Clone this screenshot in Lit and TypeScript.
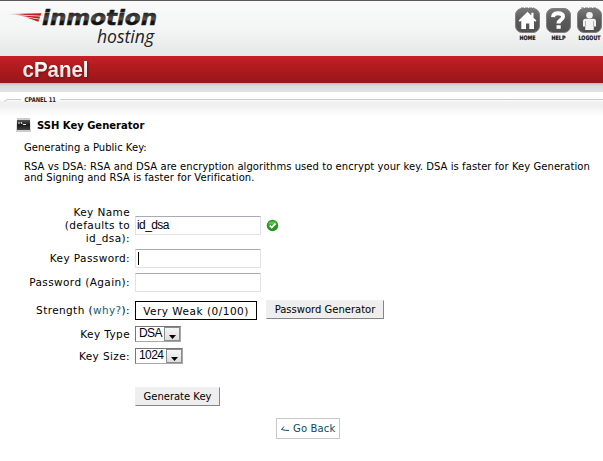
import { LitElement, html, css, svg } from "lit";
import { customElement, property } from "lit/decorators.js";

@customElement("nav-icon")
class NavIcon extends LitElement {
  @property() kind = "home";
  @property() label = "";
  static styles = css`
    :host { display: block; flex: none; width: 27px; height: 34px; }
    svg { display: block; overflow: visible; }
    .cap { font: bold 6px "DejaVu Sans", sans-serif; fill: #111; stroke: #111; stroke-width: .2px; }
  `;
  render() {
    const glyph =
      this.kind === "home"
        ? svg`<path fill="#fff" d="M12.500 3.800 16.300 7.500V4.800h2.200v4.900L21.500 12.500l-1.200 1.300L19 12.800V21h-4.700v-5.500h-3.300V21H6.300v-8.200l-1.500 1L3.600 12.500z"/><path d="M6 -.2H19" stroke="#444" stroke-width=".5" stroke-dasharray="3 1"/>`
        : this.kind === "help"
        ? svg`<path fill="none" stroke="#fff" stroke-width="4" d="M7 9.200c.2-3 2.200-3.900 5-3.900 3.300 0 5 1.400 5 3.500 0 3.300-4.500 2.900-4.500 6.600"/><path fill="#fff" d="M10.500 17.200h4.200v3.600h-4.200z"/>`
        : svg`<circle cx="12.500" cy="7.300" r="3.300" fill="#f2f2f2"/><path fill="#f2f2f2" d="M8.500 10.800h8q2.500 0 2.500 2.500V18.500h-2.200V22H8.200v-3.500H6v-5.200q0-2.500 2.500-2.500z"/><path stroke="#999" stroke-width=".7" d="M8.500 13v5.500M16.500 13v5.500"/><path d="M4 -.2H20" stroke="#444" stroke-width=".5" stroke-dasharray="3 1"/>`;
    return html`<svg width="27" height="34" viewBox="0 0 27 34">
      <defs>
        <linearGradient id="g" x2="0" y2="1"><stop stop-color="#777"/><stop offset=".5" stop-color="#5a5a5a"/><stop offset="1" stop-color="#505050"/></linearGradient>
      </defs>
      <rect x=".5" y=".5" width="24" height="24" rx="6.500" fill="url(#g)" stroke="#808080"/>
      ${glyph}
      <text class="cap" x="12.500" y="32.200" text-anchor="middle" textLength=${this.kind === "home" ? 16 : this.kind === "help" ? 14 : 22} lengthAdjust="spacingAndGlyphs">${this.label}</text>
    </svg>`;
  }
}

@customElement("site-header")
class SiteHeader extends LitElement {
  static styles = css`
    :host { display: block; }
    .top { box-sizing: border-box; height: 56px; border-top: 1px solid #59595b; display: flex; justify-content: space-between; background: linear-gradient(#fafafa, #f4f5f5 50%, #e6e8e8); }
    .logo { display: block; }
    .word { font: italic bold 21px "DejaVu Sans", "Liberation Sans", sans-serif; }
    .sub { font: italic 19px "Open Sans", sans-serif; fill: #222; }
    .nav { display: flex; gap: 4px; padding-top: 7px; width: 88px; }
    .red { height: 27px; background: linear-gradient(#c52026, #aa1a1e 55%, #98161a); }
    .brand { font: bold 22px "Liberation Sans", sans-serif; fill: url(#silver); }
    .red svg { display: block; filter: drop-shadow(1px 1px 1px #6009); }
    .shade { height: 9px; background: linear-gradient(#b9babc, #d8dadc 30%, #e2e4e6); }
    .crumb { height: 25px; background: linear-gradient(#fff 0, #fff 7px, #f1f1f1 10px, #f0f0f0 14px, #fff 24px); }
    .crumb svg { display: block; }
    .tiny { font: bold 6.500px "DejaVu Sans", sans-serif; fill: #222; }
  `;
  render() {
    return html`
      <div class="top">
        <svg class="logo" width="180" height="54" viewBox="0 1 180 54">
          <defs>
            <linearGradient id="dark" x2="0" y2="1"><stop offset=".2" stop-color="#111"/><stop offset=".55" stop-color="#555"/><stop offset=".65" stop-color="#111"/></linearGradient>
            <linearGradient id="fade"><stop stop-color="#d66" stop-opacity=".3"/><stop offset=".5" stop-color="#c3282d"/><stop offset="1" stop-color="#c5161c"/></linearGradient>
          </defs>
          <path fill="url(#fade)" d="M7 14 41.500 13.300 40.500 15.800zM17 15.300 40 16.500 39.500 18.700zM26 17.300 39.300 19.400 38.300 21.700z"/>
          <text class="word" x="42" y="25" fill="url(#dark)" stroke="#222" stroke-width=".5" textLength="115" lengthAdjust="spacingAndGlyphs">inmotion</text>
          <text class="sub" x="97" y="42.500" textLength="57" lengthAdjust="spacingAndGlyphs">hosting</text>
        </svg>
        <div class="nav">
          <nav-icon kind="home" label="HOME"></nav-icon>
          <nav-icon kind="help" label="HELP"></nav-icon>
          <nav-icon kind="logout" label="LOGOUT"></nav-icon>
        </div>
      </div>
      <div class="red">
        <svg width="110" height="27"><defs><linearGradient id="silver" x2="0" y2="1"><stop offset=".3" stop-color="#fff"/><stop offset="1" stop-color="#ccc"/></linearGradient></defs>
          <text class="brand" x="22.500" y="21" textLength="66" lengthAdjust="spacingAndGlyphs">cPanel</text>
        </svg>
      </div>
      <div class="shade"></div>
      <div class="crumb">
        <svg width="603" height="20">
          <path d="M4.500 10Q5 7.500 8 7.500H21M60 7.500H603" fill="none" stroke="#cbcbcb"/>
          <text class="tiny" x="24.500" y="9.500" textLength="31.500" lengthAdjust="spacingAndGlyphs">CPANEL 11</text>
        </svg>
      </div>
    `;
  }
}

@customElement("key-form")
class KeyForm extends LitElement {
  static styles = css`
    :host { display: block; }
    .row { display: grid; grid-template-columns: 130px 1fr; column-gap: 5px; align-items: center; }
    .label { text-align: right; font-size: 10.500px; line-height: 13px; letter-spacing: .4px; }
    .field { display: flex; align-items: center; }
    .name { height: 39px; margin-bottom: 4px; }
    .pw { height: 19px; margin-bottom: 5px; }
    .again { height: 19px; margin-bottom: 9px; }
    .strength { height: 19px; margin-bottom: 6px; }
    .type { height: 16px; margin-bottom: 6px; }
    .size { height: 16px; margin-bottom: 23px; }
    .input { box-sizing: border-box; width: 126px; height: 19px; border: 1px solid #dfe2ea; border-top-color: #a9abb2; border-radius: 1px; padding-left: 1px; font: 12px/16px "Liberation Sans", sans-serif; letter-spacing: -.6px; }
    .name .input { margin-top: -1px; }
    .caret { display: block; width: 1px; height: 13px; margin: 2px 0 0 1px; background: #000; }
    .ok { margin: -1px 0 0 5px; }
    .meter { box-sizing: border-box; width: 122px; height: 19px; border: 1px solid #000; text-align: center; font-size: 10.500px; line-height: 18px; letter-spacing: .5px; white-space: nowrap; }
    .button { box-sizing: border-box; height: 19px; background: #eee; border: 1px solid #f0f0f3; border-right-color: #858585; border-bottom-color: #858585; text-align: center; line-height: 17px; white-space: nowrap; }
    .gen { width: 118px; margin: -2px 0 0 9px; }
    .submit { width: 85px; }
    .why { color: #1b5c74; }
    .select { box-sizing: border-box; height: 16px; display: flex; border: 1px solid #a8a8a8; border-top-color: #777; border-left-color: #777; font: 12px/13px "Liberation Sans", sans-serif; letter-spacing: -.6px; padding-left: 3px; justify-content: space-between; }
    .dsa { width: 46px; }
    .bits { width: 48px; }
    .drop { box-sizing: border-box; width: 16px; height: 14px; border: 1px solid #8b8b8b; background: linear-gradient(#f6f6f6, #ddd); display: grid; place-items: end center; padding-bottom: 1px; }
    .drop svg { display: block; }
  `;
  private drop() {
    return html`<span class="drop"><svg width="7" height="4"><path d="M0 0h7L3.500 4z"/></svg></span>`;
  }
  render() {
    return html`
      <div class="row name"><div class="label">Key Name<br />(defaults to<br />id_dsa):</div>
        <div class="field"><div class="input">id_dsa</div>
          <svg class="ok" width="13" height="13"><circle cx="6.500" cy="6.500" r="5.700" fill="#22971f"/><path d="M2 5.500a4.700 4.700 0 0 1 9 0z" fill="#5cc548"/><path d="M3.700 6.500 5.800 8.500 9.500 4.700" fill="none" stroke="#fff" stroke-width="1.800"/></svg>
        </div></div>
      <div class="row pw"><div class="label">Key Password:</div><div class="input"><i class="caret"></i></div></div>
      <div class="row again"><div class="label">Password (Again):</div><div class="input"></div></div>
      <div class="row strength"><div class="label">Strength (<span class="why">why?</span>):</div>
        <div class="field"><div class="meter">Very Weak (0/100)</div><div class="button gen">Password Generator</div></div></div>
      <div class="row type"><div class="label">Key Type</div><div class="select dsa">DSA${this.drop()}</div></div>
      <div class="row size"><div class="label">Key Size:</div><div class="select bits">1024${this.drop()}</div></div>
      <div class="row"><span></span><div class="button submit">Generate Key</div></div>
    `;
  }
}

@customElement("app-root")
class AppRoot extends LitElement {
  static styles = css`
    :host { display: block; width: 603px; height: 461px; overflow: hidden; background: #fff; color: #000; font: 10px/11px "DejaVu Sans", sans-serif; }
    .title { display: flex; align-items: center; gap: 6px; height: 16px; padding-left: 16px; font-weight: bold; }
    .title svg { display: block; }
    .intro { padding: 9px 0 0 24px; white-space: nowrap; letter-spacing: .03px; }
    .about { padding: 8px 0 23px 24px; white-space: nowrap; letter-spacing: .06px; }
    .back { box-sizing: border-box; width: 64px; height: 21px; margin: 12px 0 0 276px; border: 1px solid #c9c9c9; display: flex; align-items: center; padding-left: 4px; gap: 4px; color: #0e4a5c; white-space: nowrap; letter-spacing: .15px; }
  `;
  render() {
    return html`
      <site-header></site-header>
      <div class="title">
        <svg width="15" height="14"><defs><linearGradient id="t" x2="0" y2="1"><stop stop-color="#555"/><stop offset=".5" stop-color="#1a1a1a"/><stop offset="1" stop-color="#444"/></linearGradient></defs>
          <path d="M1 0h13l1 14H0z" fill="#ccc"/><path d="M1 2h13v10H1z" fill="url(#t)"/><path d="M3 4v2M5 4l1 2M7 6.500h3" stroke="#eee" fill="none"/></svg>
        <span>SSH Key Generator</span>
      </div>
      <div class="intro">Generating a Public Key:</div>
      <div class="about">RSA vs DSA: RSA and DSA are encryption algorithms used to encrypt your key. DSA is faster for Key Generation<br />and Signing and RSA is faster for Verification.</div>
      <key-form></key-form>
      <div class="back"><svg width="8" height="6"><path d="M3 .5.500 3.500Q4 4.500 8 4.500" fill="none" stroke="#0e4a5c"/></svg><span>Go Back</span></div>
    `;
  }
}
